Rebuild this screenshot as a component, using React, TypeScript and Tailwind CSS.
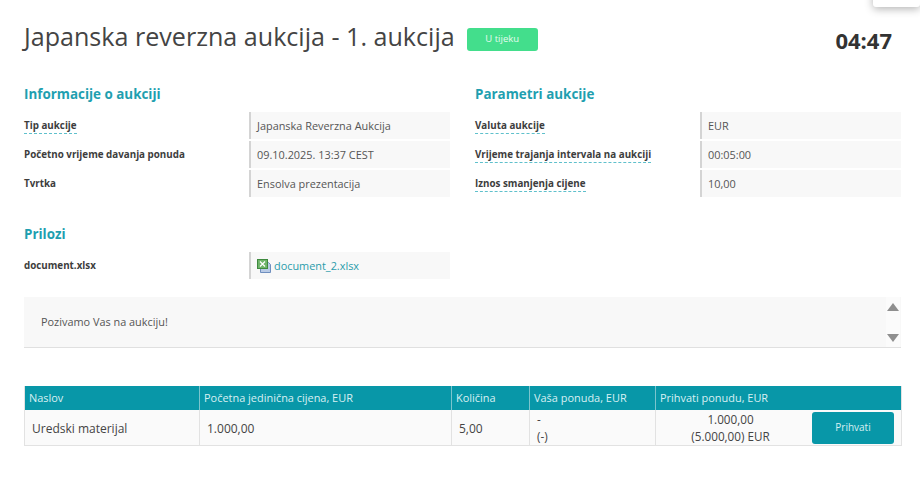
const font = { fontFamily: '"Open Sans", sans-serif' };

function Row({ label, value, dashed }: { label: string; value: React.ReactNode; dashed?: boolean }) {
  return (
    <div className="flex h-[27px] items-center">
      <div className="w-[225px] shrink-0 text-[9.8px] font-bold leading-[14px] text-[#3d3d3d]">
        <span className={dashed ? "border-b border-dashed border-[#5fc0cc] pb-[1px]" : ""}>{label}</span>
      </div>
      <div className="flex h-full flex-1 items-center border-l-2 border-[#d4d4d4] bg-[#f8f8f8] pl-[6px] pt-[1px] text-[10.9px] text-[#555]">
        {value}
      </div>
    </div>
  );
}

function Heading({ children }: { children: React.ReactNode }) {
  return <h2 className="text-[13.4px] font-bold leading-[20px] text-[#1f9fb0]">{children}</h2>;
}

function XlsIcon() {
  return (
    <svg width="15" height="15" viewBox="0 0 15 15" className="mr-[2px] shrink-0">
      <path d="M3.5 3.5h8l2 2v8h-10z" fill="#b9cbe6" stroke="#6f8fbf" strokeWidth="1" />
      <rect x="0.5" y="0.5" width="10" height="9" fill="#6fb46a" stroke="#3f8a3f" strokeWidth="1" />
      <path d="M3 2.5l5 5M8 2.5l-5 5" stroke="#fff" strokeWidth="1.2" />
    </svg>
  );
}

const th = "border-r border-[#7cc4cd] px-[4px] text-left text-[10.95px] font-normal text-[#d8f0f3] last:border-r-0";
const td = "border-r border-[#e2e2e2] text-[12px] text-[#444] last:border-r-0";

export default function App() {
  return (
    <div className="relative h-[482px] w-[920px] overflow-hidden bg-white pl-[24px] pr-[19px]" style={font}>
      <div className="absolute right-0 top-[-10px] flex h-[17px] w-[47px] items-end justify-center rounded-[3px] bg-white shadow-[0_2px_8px_rgba(0,0,0,0.3)]" />

      <header className="flex h-[84px] items-start pt-[19px]">
        <h1 className="text-[25.1px] font-normal leading-[34px] text-[#444]">Japanska reverzna aukcija - 1. aukcija</h1>
        <span className="ml-[12px] mt-[9px] flex h-[23px] w-[71px] items-center justify-center rounded-[3px] bg-[#43de8c] text-[9.5px] text-[#e6fbef]">
          U tijeku
        </span>
        <span className="ml-auto mt-[6px] pr-[9px] text-[22px] font-bold leading-[30px] text-[#333]">04:47</span>
      </header>

      <section className="grid grid-cols-2 gap-x-[25px]">
        <div>
          <Heading>Informacije o aukciji</Heading>
          <div className="mt-[8px] flex flex-col gap-[2px]">
            <Row label="Tip aukcije" value="Japanska Reverzna Aukcija" dashed />
            <Row label="Početno vrijeme davanja ponuda" value="09.10.2025. 13:37 CEST" />
            <Row label="Tvrtka" value="Ensolva prezentacija" />
          </div>
        </div>
        <div>
          <Heading>Parametri aukcije</Heading>
          <div className="mt-[8px] flex flex-col gap-[2px]">
            <Row label="Valuta aukcije" value="EUR" dashed />
            <Row label="Vrijeme trajanja intervala na aukciji" value="00:05:00" dashed />
            <Row label="Iznos smanjenja cijene" value="10,00" dashed />
          </div>
        </div>
      </section>

      <section className="mt-[27px] w-[426px]">
        <Heading>Prilozi</Heading>
        <div className="mt-[8px]">
          <Row
            label="document.xlsx"
            value={
              <>
                <XlsIcon />
                <span className="text-[#2a9cab]">document_2.xlsx</span>
              </>
            }
          />
        </div>
      </section>

      <section className="mt-[18px] flex h-[51px] items-center justify-between border-b border-[#e0e0e0] bg-[#f8f8f8] pl-[17px] pr-[1px]">
        <span className="pt-[1px] text-[10.9px] text-[#555]">Pozivamo Vas na aukciju!</span>
        <div className="flex h-full flex-col items-center justify-between bg-[#fbfbfb] px-[1px] pb-[5px] pt-[6px]">
          <svg width="12" height="8" viewBox="0 0 12 8"><path d="M6 0l6 8H0z" fill="#8f8f8f" /></svg>
          <svg width="12" height="8" viewBox="0 0 12 8"><path d="M0 0h12L6 8z" fill="#8f8f8f" /></svg>
        </div>
      </section>

      <table className="mt-[38px] w-[877px] table-fixed border-collapse border-b border-l border-r border-[#e2e2e2]">
        <colgroup>
          <col className="w-[175px]" />
          <col className="w-[252px]" />
          <col className="w-[78px]" />
          <col className="w-[126px]" />
          <col className="w-[246px]" />
        </colgroup>
        <thead>
          <tr className="h-[24px] bg-[#0897a8]">
            <th className={th}>Naslov</th>
            <th className={th}>Početna jedinična cijena, EUR</th>
            <th className={th}>Količina</th>
            <th className={th}>Vaša ponuda, EUR</th>
            <th className={th}>Prihvati ponudu, EUR</th>
          </tr>
        </thead>
        <tbody>
          <tr className="h-[35px] bg-[#fafafa]">
            <td className={`${td} pl-[7px] pt-[2px]`}>Uredski materijal</td>
            <td className={`${td} pl-[7px] pt-[2px]`}>1.000,00</td>
            <td className={`${td} pl-[7px] pt-[2px]`}>5,00</td>
            <td className={`${td} pl-[7px] !text-[11.7px] leading-[17px]`}>
              <div>-</div>
              <div>(-)</div>
            </td>
            <td className={td}>
              <div className="flex items-center justify-between pr-[7px]">
                <div className="w-[149px] pt-[1px] text-center text-[11.7px] leading-[17px]">
                  <div>1.000,00</div>
                  <div>(5.000,00) EUR</div>
                </div>
                <button className="flex h-[32px] w-[82px] items-center justify-center rounded-[3px] bg-[#0897a8] text-[10px] text-[#d8f0f3]">
                  Prihvati
                </button>
              </div>
            </td>
          </tr>
        </tbody>
      </table>
    </div>
  );
}
